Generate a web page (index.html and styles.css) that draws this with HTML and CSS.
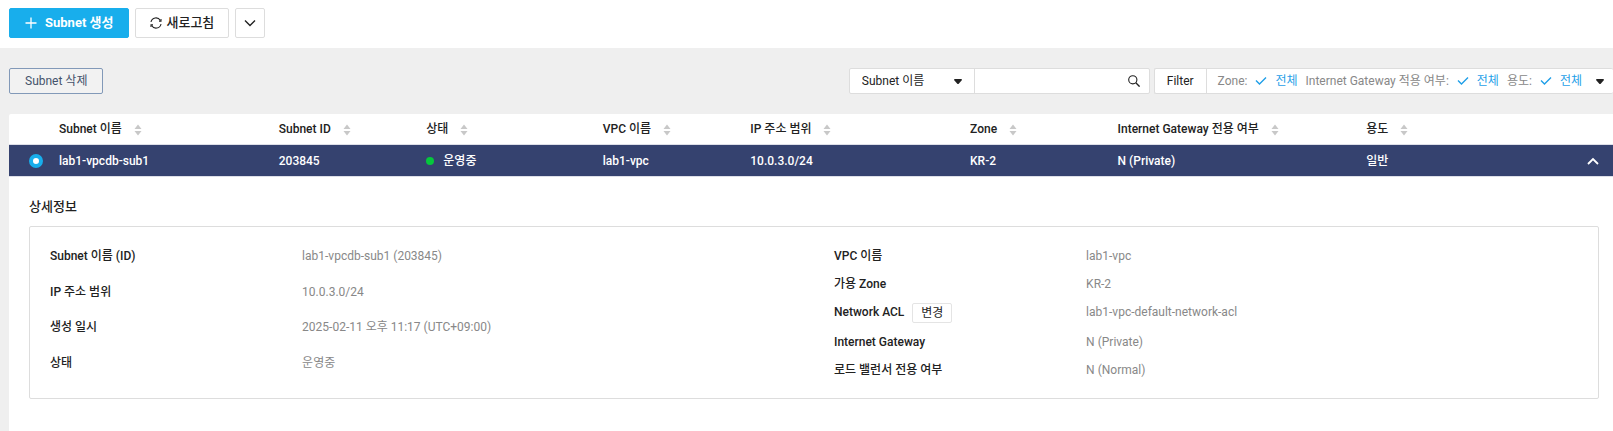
FILE: index.html
```html
<!DOCTYPE html>
<html lang="ko">
  <head>
    <meta charset="UTF-8" />
    <meta name="viewport" content="width=device-width, initial-scale=1.0" />
    <title>Subnet</title>
    <link rel="stylesheet" href="styles.css">
  </head>
  <body>
    <!-- Icons used more than once -->
    <svg class="sprite" aria-hidden="true">
      <symbol id="icon-sort" viewBox="0 0 8 12">
        <path d="M4 0.5 7.5 5h-7zM4 11.5 0.5 7h7z" fill="#c8c8c8" />
      </symbol>
      <symbol id="icon-check" viewBox="0 0 12 10">
        <path d="M1 4.5 4.5 8 11 1.5" fill="none" stroke="#1f9fe8" stroke-width="1.4" />
      </symbol>
      <symbol id="icon-caret" viewBox="0 0 8 5">
        <path d="M0.5 0h7L8 1 4.5 5h-1L0 1z" fill="#222" />
      </symbol>
    </svg>

    <header class="topbar">
      <button type="button" class="btn btn-primary">
        <svg width="12" height="12" viewBox="0 0 12 12"><path d="M6 0.5v11M0.5 6h11" stroke="#fff" stroke-width="1.3" /></svg>
        Subnet 생성
      </button>
      <button type="button" class="btn btn-refresh">
        <svg width="12" height="12" viewBox="0 0 12 12" fill="none" stroke="#222" stroke-width="1.1">
          <path d="M1 5A5 5 0 0 1 10.3 3.5M11 7A5 5 0 0 1 1.7 8.5" />
          <path d="M11 2v2.1H9M1 10V7.9h2" />
        </svg>
        새로고침
      </button>
      <button type="button" class="btn btn-more" aria-label="더보기">
        <svg width="12" height="8" viewBox="0 0 12 8"><path d="M1 1.5 6 6.5l5-5" fill="none" stroke="#222" stroke-width="1.4" /></svg>
      </button>
    </header>

    <div class="toolbar">
      <button type="button" class="btn-delete">Subnet 삭제</button>

      <form class="search">
        <div class="search-type">
          <select aria-label="검색 조건">
            <option>Subnet 이름</option>
          </select>
          <svg class="caret" width="8" height="5"><use href="#icon-caret" /></svg>
        </div>
        <input type="text" class="search-input" aria-label="검색어" />
        <button type="button" class="search-btn" aria-label="검색">
          <svg width="12" height="12" viewBox="0 0 12 12" fill="none" stroke="#222">
            <circle cx="4.8" cy="4.8" r="4.1" stroke-width="1.1" />
            <path d="M7.8 7.8 11.6 11.6" stroke-width="1.4" />
          </svg>
        </button>
      </form>

      <div class="filter">
        <span class="filter-title">Filter</span>
        <button type="button" class="filter-list">
          <span class="filter-item">Zone: <svg width="12" height="10"><use href="#icon-check" /></svg><b>전체</b></span>
          <span class="filter-item">Internet Gateway 적용 여부: <svg width="12" height="10"><use href="#icon-check" /></svg><b>전체</b></span>
          <span class="filter-item">용도: <svg width="12" height="10"><use href="#icon-check" /></svg><b>전체</b></span>
          <svg class="filter-caret" width="8" height="5"><use href="#icon-caret" /></svg>
        </button>
      </div>
    </div>

    <main class="content">
      <table class="subnet-table">
        <colgroup>
          <col class="col-radio" />
          <col class="col-name" />
          <col class="col-id" />
          <col class="col-status" />
          <col class="col-vpc" />
          <col class="col-ip" />
          <col class="col-zone" />
          <col class="col-gateway" />
          <col />
        </colgroup>
        <thead>
          <tr>
            <th></th>
            <th>Subnet 이름<svg class="sort" width="8" height="12"><use href="#icon-sort" /></svg></th>
            <th>Subnet ID<svg class="sort" width="8" height="12"><use href="#icon-sort" /></svg></th>
            <th>상태<svg class="sort" width="8" height="12"><use href="#icon-sort" /></svg></th>
            <th>VPC 이름<svg class="sort" width="8" height="12"><use href="#icon-sort" /></svg></th>
            <th>IP 주소 범위<svg class="sort" width="8" height="12"><use href="#icon-sort" /></svg></th>
            <th>Zone<svg class="sort" width="8" height="12"><use href="#icon-sort" /></svg></th>
            <th>Internet Gateway 전용 여부<svg class="sort" width="8" height="12"><use href="#icon-sort" /></svg></th>
            <th>용도<svg class="sort" width="8" height="12"><use href="#icon-sort" /></svg></th>
          </tr>
        </thead>
        <tbody>
          <tr>
            <td class="cell-radio"><input type="radio" name="subnet" aria-label="lab1-vpcdb-sub1" checked /></td>
            <td>lab1-vpcdb-sub1</td>
            <td>203845</td>
            <td><span class="dot"></span>운영중</td>
            <td>lab1-vpc</td>
            <td>10.0.3.0/24</td>
            <td>KR-2</td>
            <td>N (Private)</td>
            <td>
              <div class="cell-last">
                일반
                <button type="button" class="btn-fold" aria-label="접기">
                  <svg width="12" height="8" viewBox="0 0 12 8"><path d="M1 7 6 2l5 5" fill="none" stroke="#fff" stroke-width="1.8" /></svg>
                </button>
              </div>
            </td>
          </tr>
        </tbody>
      </table>

      <section class="detail">
        <h2>상세정보</h2>
        <div class="detail-box">
          <dl>
            <div class="row"><dt>Subnet 이름 (ID)</dt><dd>lab1-vpcdb-sub1 (203845)</dd></div>
            <div class="row"><dt>IP 주소 범위</dt><dd>10.0.3.0/24</dd></div>
            <div class="row"><dt>생성 일시</dt><dd>2025-02-11 오후 11:17 (UTC+09:00)</dd></div>
            <div class="row"><dt>상태</dt><dd>운영중</dd></div>
          </dl>
          <dl>
            <div class="row"><dt>VPC 이름</dt><dd>lab1-vpc</dd></div>
            <div class="row"><dt>가용 Zone</dt><dd>KR-2</dd></div>
            <div class="row"><dt>Network ACL <button type="button" class="btn-change">변경</button></dt><dd>lab1-vpc-default-network-acl</dd></div>
            <div class="row"><dt>Internet Gateway</dt><dd>N (Private)</dd></div>
            <div class="row"><dt>로드 밸런서 전용 여부</dt><dd>N (Normal)</dd></div>
          </dl>
        </div>
      </section>
    </main>
  </body>
</html>
```

FILE: styles.css
```css
/* General Styles */
* {
  box-sizing: border-box;
}

body {
  display: flex;
  flex-direction: column;
  min-height: 100vh;
  margin: 0;
  background-color: #efefef;
  color: #222;
  font-family: Roboto, "Noto Sans CJK KR", sans-serif;
  font-size: 12px;
  line-height: 18px;
}

button,
input,
select {
  font: inherit;
  color: inherit;
}

button {
  display: flex;
  align-items: center;
  justify-content: center;
  padding: 0;
  white-space: nowrap;
  cursor: pointer;
}

.sprite {
  display: none;
}

/* Top bar */
.topbar {
  display: flex;
  gap: 6px;
  padding: 8px 9px 10px;
  background: #fff;
}

.btn {
  height: 30px;
  padding: 0 15px;
  border: 1px solid #ddd;
  border-radius: 2px;
  background: #fff;
  font-size: 13px;
  font-weight: 500;
}

.btn-primary {
  gap: 8px;
  border-color: #18aeec;
  background: #18aeec;
  color: #fff;
  font-weight: 700;
}

.btn-refresh {
  gap: 4px;
  padding: 0 14px;
}

.btn-more {
  width: 30px;
  padding: 0;
}

/* Toolbar */
.toolbar {
  display: flex;
  gap: 4px;
  padding: 20px 0 20px 9px;
}

.btn-delete {
  height: 26px;
  padding: 0 15px;
  border: 1px solid #8299b8;
  border-radius: 2px;
  background: #f2f2f2;
  color: #45536b;
}

.search,
.filter {
  display: flex;
  height: 26px;
  border: 1px solid #ddd;
  border-radius: 2px;
  background: #fff;
}

.search {
  margin-left: auto;
}

.search-type {
  position: relative;
  width: 125px;
  border-right: 1px solid #ddd;
}

.search-type select {
  width: 100%;
  height: 24px;
  padding: 0 12px;
  border: 0;
  background: none;
  appearance: none;
}

.caret {
  position: absolute;
  top: 10px;
  right: 12px;
  pointer-events: none;
}

.search-input {
  width: 144px;
  padding: 0 8px;
  border: 0;
  background: none;
}

.search-btn {
  width: 30px;
  border: 0;
  background: none;
}

.filter {
  border-right: 0;
}

.filter-title {
  padding: 3px 12px;
  border-right: 1px solid #ddd;
}

.filter-list {
  gap: 8px;
  padding: 0 9px 0 11px;
  border: 0;
  background: none;
  color: #888;
}

.filter-item {
  display: flex;
  align-items: center;
}

.filter-item svg {
  margin: 0 8px;
}

.filter-item b {
  color: #1f9fe8;
  font-weight: 400;
}

.filter-caret {
  margin-left: 6px;
}

/* Subnet Table */
.content {
  flex: 1;
  margin-left: 9px;
  border-top-left-radius: 2px;
  background: #fff;
}

.subnet-table {
  width: 100%;
  border-collapse: separate;
  border-spacing: 0;
  table-layout: fixed;
  text-align: left;
  white-space: nowrap;
}

.col-radio {
  width: 50px;
}

.col-name,
.col-ip {
  width: 13.7%;
}

.col-id,
.col-vpc,
.col-zone {
  width: 9.2%;
}

.col-status {
  width: 11%;
}

.col-gateway {
  width: 15.5%;
}

.subnet-table th,
.subnet-table td {
  height: 31px;
  padding: 0;
  border-bottom: 1px solid #dddfe8;
  font-weight: 500;
}

.subnet-table td {
  height: 32px;
}

.subnet-table tbody tr {
  background: #35426f;
  color: #fff;
}

.sort {
  margin-left: 12px;
  vertical-align: middle;
}

.cell-radio input {
  display: block;
  width: 14px;
  height: 14px;
  margin: 0 0 0 20px;
  border: 4px solid #18aeec;
  border-radius: 50%;
  background: #fff;
  appearance: none;
}

.dot {
  display: inline-block;
  width: 8px;
  height: 8px;
  margin-right: 9px;
  border-radius: 50%;
  background: #05c73c;
}

.cell-last {
  display: flex;
  justify-content: space-between;
  padding-right: 14px;
}

.btn-fold {
  border: 0;
  background: none;
}

/* Detail Section */
.detail {
  padding: 20px 14px 20px 20px;
}

.detail h2 {
  margin: 0 0 9px;
  font-size: 13px;
  line-height: 20px;
  font-weight: 500;
}

.detail-box {
  display: grid;
  grid-template-columns: 1fr 1fr;
  padding: 20px 0 9px;
  border: 1px solid #ddd;
  border-radius: 2px;
}

.detail-box dl {
  display: grid;
  margin: 0;
  padding-left: 20px;
}

.row {
  display: grid;
  grid-template-columns: 33% 1fr;
  align-items: start;
  padding-bottom: 10px;
}

.row dt {
  display: flex;
  gap: 8px;
  font-weight: 500;
}

.row dd {
  margin: 0;
  color: #888;
}

.btn-change {
  height: 20px;
  padding: 0 8px;
  border: 1px solid #e4e4e4;
  border-radius: 2px;
  background: #fff;
  font-weight: 400;
}
```
